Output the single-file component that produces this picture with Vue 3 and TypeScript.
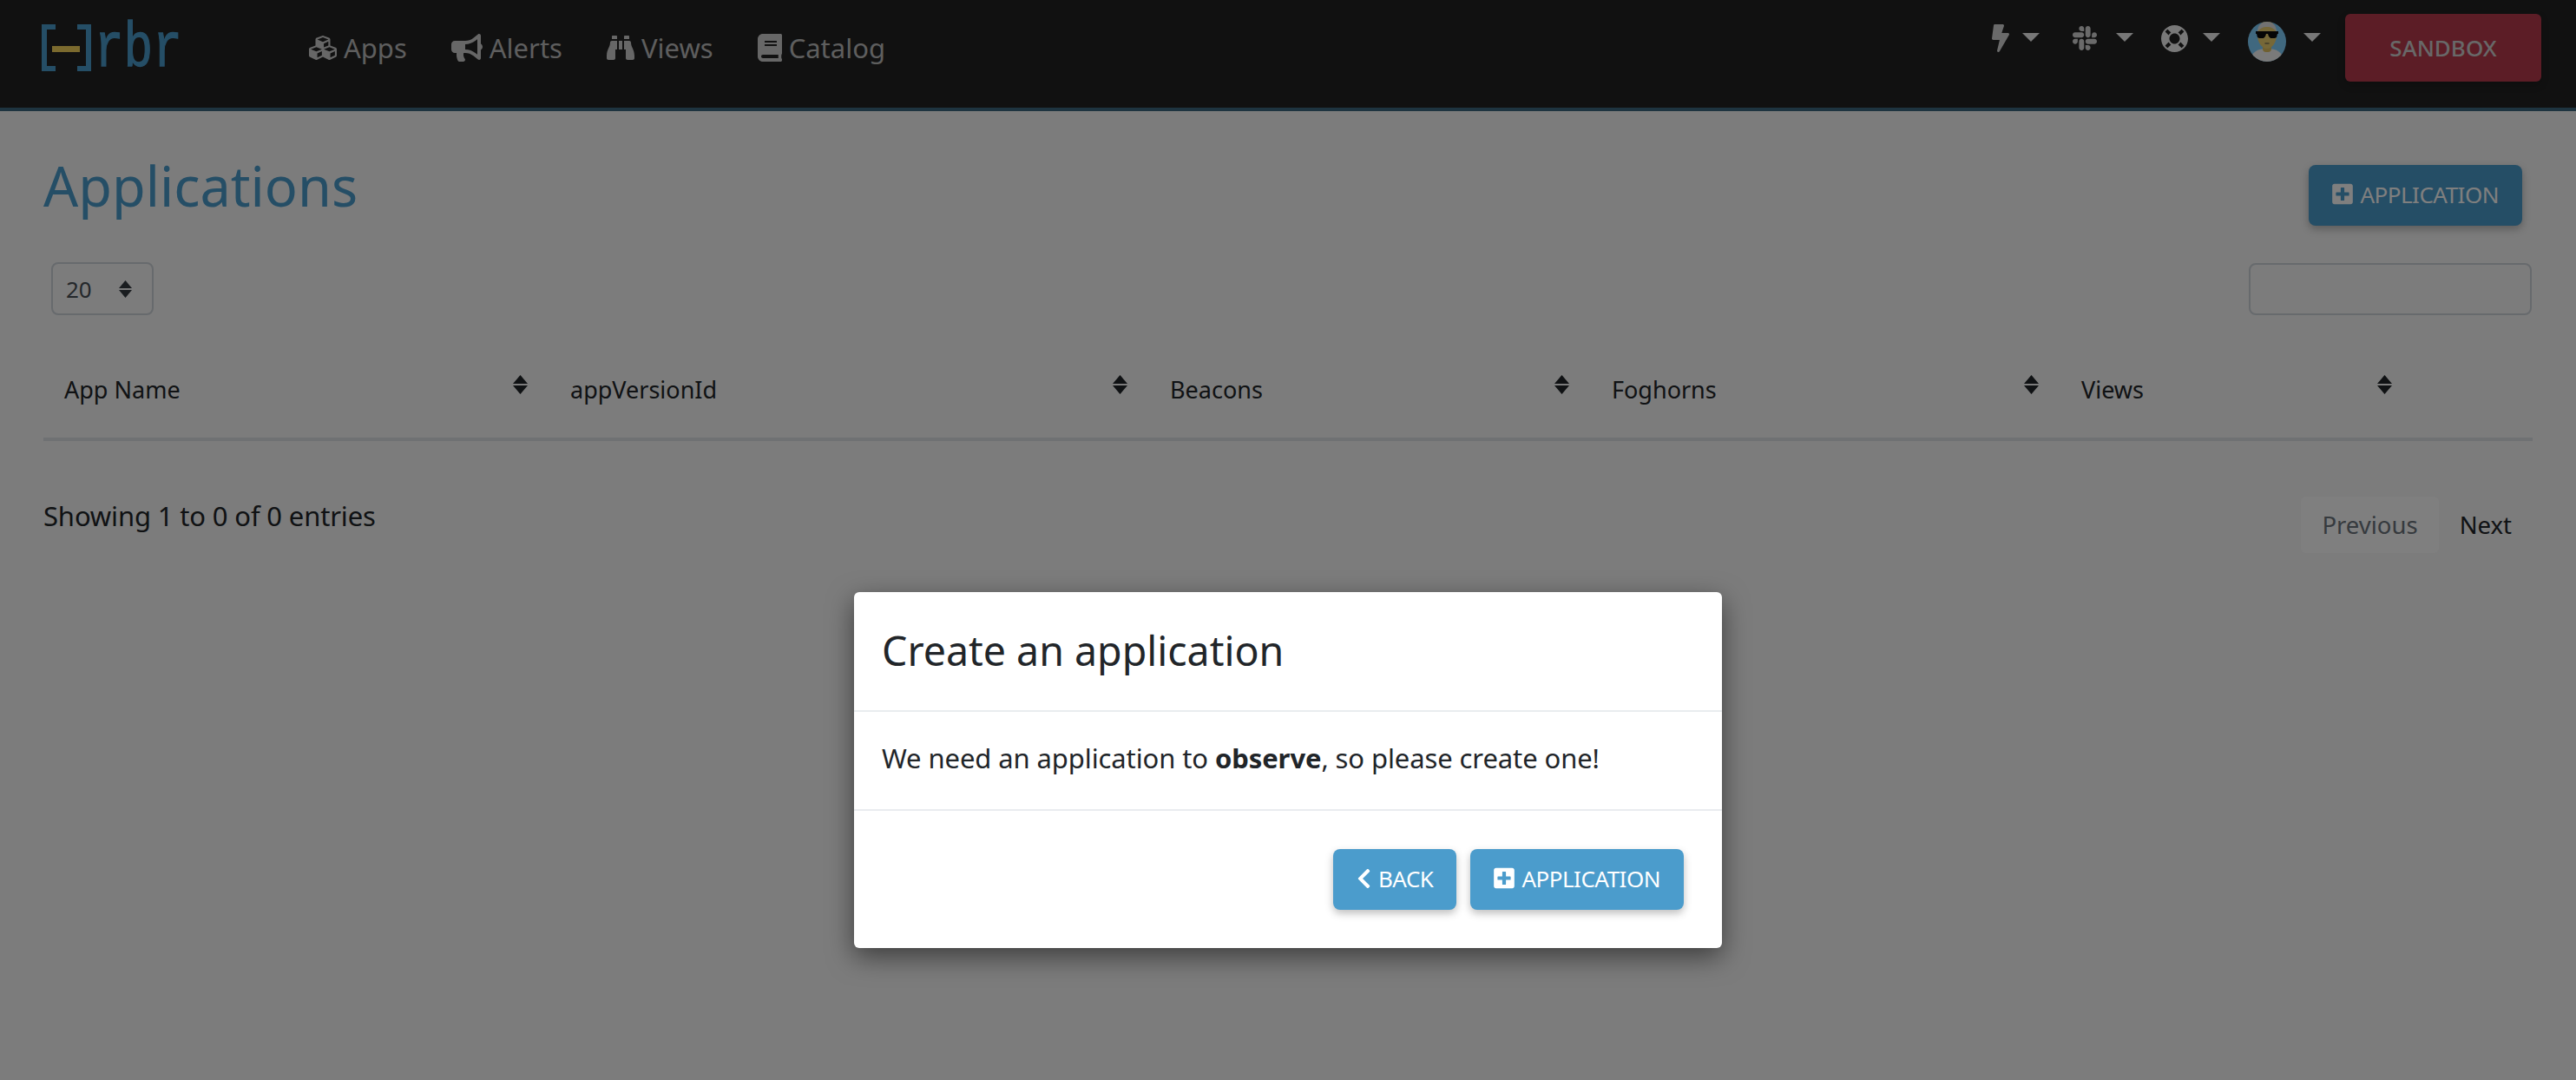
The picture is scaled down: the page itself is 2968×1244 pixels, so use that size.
<script setup lang="ts">
const cols = [
  { name: 'App Name', width: 583 },
  { name: 'appVersionId', width: 691 },
  { name: 'Beacons', width: 509 },
  { name: 'Foghorns', width: 541 },
  { name: 'Views', width: 544 },
]
const plus = 'M400 32H48C21.5 32 0 53.5 0 80v352c0 26.5 21.5 48 48 48h352c26.5 0 48-21.5 48-48V80c0-26.5-21.5-48-48-48zm-32 252c0 6.6-5.4 12-12 12h-92v92c0 6.6-5.4 12-12 12h-56c-6.6 0-12-5.4-12-12v-92H92c-6.6 0-12-5.4-12-12v-56c0-6.6 5.4-12 12-12h92v-92c0-6.6 5.4-12 12-12h56c6.6 0 12 5.4 12 12v92h92c6.6 0 12 5.4 12 12v56z'
const navItems = [
  { label: 'Apps', vb: '0 0 512 512', w: 32, d: 'M488.6 250.2L392 214V105.5c0-15-9.3-28.4-23.4-33.7l-100-37.5c-8.1-3.1-17.1-3.1-25.3 0l-100 37.5c-14.1 5.3-23.4 18.7-23.4 33.7V214l-96.6 36.2C9.3 255.5 0 268.9 0 283.9V394c0 13.6 7.7 26.1 19.9 32.2l100 50c10.1 5.1 22.1 5.1 32.2 0l103.9-52 103.9 52c10.1 5.1 22.1 5.1 32.2 0l100-50c12.2-6.1 19.9-18.6 19.9-32.2V283.9c0-15-9.3-28.4-23.4-33.7zM358 214.8l-85 31.9v-68.2l85-37v73.3zM154 104.1l102-38.2 102 38.2v.6l-102 41.4-102-41.4v-.6zm84 291.1l-85 42.5v-79.1l85-38.8v75.4zm0-112l-102 41.4-102-41.4v-.6l102-38.2 102 38.2v.6zm240 112l-85 42.5v-79.1l85-38.8v75.4zm0-112l-102 41.4-102-41.4v-.6l102-38.2 102 38.2v.6z' },
  { label: 'Alerts', vb: '0 0 576 512', w: 36, d: 'M576 240c0-23.63-12.95-44.04-32-55.12V32.01C544 23.26 537.02 0 512 0c-7.12 0-14.19 2.38-19.98 7.02l-85.03 68.03C364.28 109.19 310.66 128 256 128H64c-35.35 0-64 28.65-64 64v96c0 35.35 28.65 64 64 64h33.7c-1.39 10.48-2.18 21.14-2.18 32 0 39.77 9.26 77.35 25.56 110.94 5.19 10.69 16.52 17.06 28.4 17.06h74.28c26.05 0 41.69-29.84 25.9-50.56-16.4-21.52-26.15-48.36-26.15-77.44 0-11.11 1.62-21.79 4.41-32H256c54.66 0 108.28 18.81 150.98 52.95l85.03 68.03a32.023 32.023 0 0 0 19.98 7.02c24.92 0 32-22.78 32-32V295.13C563.05 284.04 576 263.63 576 240zm-96 141.42l-33.05-26.44C392.95 311.78 325.12 288 256 288v-96c69.12 0 136.95-23.78 190.95-66.98L480 98.58v282.84z' },
  { label: 'Views', vb: '0 0 512 512', w: 32, d: 'M416 48c0-8.84-7.16-16-16-16h-64c-8.84 0-16 7.16-16 16v48h96V48zM63.91 159.99C61.4 253.84 3.46 274.22 0 404v44c0 17.67 14.33 32 32 32h96c17.67 0 32-14.33 32-32V288h32V128H95.84c-17.63 0-31.45 14.37-31.93 31.99zm384.18 0c-.48-17.62-14.3-31.99-31.93-31.99H320v160h32v160c0 17.67 14.33 32 32 32h96c17.67 0 32-14.33 32-32v-44c-3.46-129.78-61.4-150.16-63.91-244.01zM176 32h-64c-8.84 0-16 7.16-16 16v48h96V48c0-8.84-7.16-16-16-16zm48 256h64V128h-64v160z' },
  { label: 'Catalog', vb: '0 0 448 512', w: 28, d: 'M448 360V24c0-13.3-10.7-24-24-24H96C43 0 0 43 0 96v320c0 53 43 96 96 96h328c13.3 0 24-10.7 24-24v-16c0-7.5-3.5-14.3-8.9-18.7-4.2-15.4-4.2-59.3 0-74.7 5.4-4.3 8.9-11.1 8.9-18.6zM128 134c0-3.3 2.7-6 6-6h212c3.3 0 6 2.7 6 6v20c0 3.3-2.7 6-6 6H134c-3.3 0-6-2.7-6-6v-20zm0 64c0-3.3 2.7-6 6-6h212c3.3 0 6 2.7 6 6v20c0 3.3-2.7 6-6 6H134c-3.3 0-6-2.7-6-6v-20zm253.4 250H96c-17.7 0-32-14.3-32-32 0-17.6 14.4-32 32-32h285.4c-1.9 17.1-1.9 46.9 0 64z' },
]
</script>

<template>
  <div class="page">
    <header class="navbar">
      <div class="brand">
        <svg class="brand-mark" viewBox="0 0 57 54" width="57" height="54">
          <path d="M16 3H3v48h13" fill="none" stroke="#4b9ccc" stroke-width="6" />
          <path d="M41 3h13v48H41" fill="none" stroke="#4b9ccc" stroke-width="6" />
          <rect x="12" y="25" width="32" height="7" fill="#f6d55c" />
        </svg>
        <span class="brand-text">rbr</span>
      </div>
      <nav class="nav">
        <a v-for="item in navItems" :key="item.label" class="nav-link">
          <svg :viewBox="item.vb" :width="item.w" height="32" fill="#cfcfcf"><path :d="item.d" /></svg>
          <span>{{ item.label }}</span>
        </a>
      </nav>
      <div class="tools">
        <div class="tool bolt">
          <svg viewBox="0 0 320 512" width="20" height="32" fill="#d4d4d4"><path d="M296 160H180.6l42.6-129.8C227.2 15 215.7 0 200 0H56C44 0 33.8 8.9 32.2 20.8l-32 240C-1.7 275.2 9.5 288 24 288h118.7L96.6 482.5c-3.6 15.2 8 29.5 23.3 29.5 8.4 0 16.4-4.4 20.8-12l176-304c9.3-15.9-2.2-36-20.7-36z" /></svg>
          <i class="caret"></i>
        </div>
        <div class="tool slack">
          <svg viewBox="0 0 448 512" width="28" height="32" fill="#d4d4d4"><path d="M94.12 315.1c0 25.9-21.16 47.06-47.06 47.06S0 341 0 315.1c0-25.9 21.16-47.06 47.06-47.06h47.06v47.06zm23.72 0c0-25.9 21.16-47.06 47.06-47.06s47.06 21.16 47.06 47.06v117.84c0 25.9-21.16 47.06-47.06 47.06s-47.06-21.16-47.06-47.06V315.1zm47.06-188.98c-25.9 0-47.06-21.16-47.06-47.06S139 32 164.9 32s47.06 21.16 47.06 47.06v47.06H164.9zm0 23.72c25.9 0 47.06 21.16 47.06 47.06s-21.16 47.06-47.06 47.06H47.06C21.16 243.96 0 222.8 0 196.9s21.16-47.06 47.06-47.06H164.9zm188.98 47.06c0-25.9 21.16-47.06 47.06-47.06 25.9 0 47.06 21.16 47.06 47.06s-21.16 47.06-47.06 47.06h-47.06V196.9zm-23.72 0c0 25.9-21.16 47.06-47.06 47.06-25.9 0-47.06-21.16-47.06-47.06V79.06c0-25.9 21.16-47.06 47.06-47.06 25.9 0 47.06 21.16 47.06 47.06V196.9zM283.1 385.88c25.9 0 47.06 21.16 47.06 47.06 0 25.9-21.16 47.06-47.06 47.06-25.9 0-47.06-21.16-47.06-47.06v-47.06h47.06zm0-23.72c-25.9 0-47.06-21.16-47.06-47.06 0-25.9 21.16-47.06 47.06-47.06h117.84c25.9 0 47.06 21.16 47.06 47.06 0 25.9-21.16 47.06-47.06 47.06H283.1z" /></svg>
          <i class="caret"></i>
        </div>
        <div class="tool ring">
          <svg viewBox="8 8 496 496" width="31" height="31" fill="#f0f0f0"><path d="M256 8C119 8 8 119 8 256s111 248 248 248 248-111 248-248S393 8 256 8zm173.696 119.559l-63.399 63.399c-10.987-18.559-26.67-34.252-45.255-45.255l63.399-63.399a218.396 218.396 0 0 1 45.255 45.255zM256 352c-53.019 0-96-42.981-96-96s42.981-96 96-96 96 42.981 96 96-42.981 96-96 96zM127.559 82.304l63.399 63.399c-18.559 10.987-34.252 26.67-45.255 45.255l-63.399-63.399a218.372 218.372 0 0 1 45.255-45.255zM82.304 384.441l63.399-63.399c10.987 18.559 26.67 34.252 45.255 45.255l-63.399 63.399a218.396 218.396 0 0 1-45.255-45.255zm302.137 45.255l-63.399-63.399c18.559-10.987 34.252-26.67 45.255-45.255l63.399 63.399a218.403 218.403 0 0 1-45.255 45.255z" /></svg>
          <i class="caret"></i>
        </div>
        <div class="tool avatar-tool">
          <svg viewBox="0 0 44 46" width="44" height="46">
            <defs><clipPath id="av"><ellipse cx="22" cy="23" rx="22" ry="23" /></clipPath></defs>
            <g clip-path="url(#av)">
              <rect width="44" height="46" fill="#80d0ff" />
              <path d="M3 46c0-11 8-15 19-15s19 4 19 15z" fill="#f4f4f4" />
              <rect x="17" y="24" width="10" height="11" rx="4" fill="#e0c060" />
              <ellipse cx="22" cy="15" rx="11" ry="16" fill="#ecd070" />
              <path d="M11 12C11 3 17 0 22 0s11 3 11 12c-3-5-7-6-11-6s-8 1-11 6z" fill="#e4e4e4" />
              <path d="M9 11h26v3h-1l-1 4-2 1h-5l-2-2-1-3h-2l-1 3-2 2h-5l-2-1-1-4H9z" fill="#0d0d0d" />
              <path d="M19.500 25h5" stroke="#444" stroke-width="1" />
            </g>
          </svg>
          <i class="caret"></i>
        </div>
        <button class="sandbox">SANDBOX</button>
      </div>
    </header>

    <main class="content">
      <div class="title-row">
        <h1 class="title">Applications</h1>
        <button class="btn">
          <svg viewBox="0 0 448 512" width="24" height="27" fill="currentColor"><path :d="plus" /></svg>
          APPLICATION
        </button>
      </div>
      <div class="filter-row">
        <div class="length-select">
          <span>20</span>
          <svg viewBox="0 0 15 20" width="15" height="20"><path d="M7.500 0l7.500 9H0zM7.500 20l7.500-9H0z" fill="#343a40" /></svg>
        </div>
        <div class="search-box"></div>
      </div>
      <div class="table-head">
        <div v-for="col in cols" :key="col.name" class="th" :style="{ width: col.width + 'px' }">
          <span>{{ col.name }}</span>
          <svg viewBox="0 0 17 22" width="17" height="22"><path d="M8.500 0L17 10H0zM8.500 22L17 12H0z" fill="#212529" /></svg>
        </div>
      </div>
      <div class="foot-row">
        <div class="info">Showing 1 to 0 of 0 entries</div>
        <div class="pager">
          <span class="page-btn disabled">Previous</span>
          <span class="page-btn">Next</span>
        </div>
      </div>
    </main>

    <div class="backdrop"></div>

    <div class="modal">
      <div class="modal-header">Create an application</div>
      <div class="modal-body">We need an application to <b>observe</b>, so please create one!</div>
      <div class="modal-footer">
        <button class="btn">
          <svg viewBox="0 0 320 512" width="17" height="26" fill="currentColor"><path d="M34.52 239.03L228.87 44.69c9.37-9.37 24.57-9.37 33.94 0l22.67 22.67c9.36 9.36 9.37 24.52.04 33.9L131.49 256l154.02 154.75c9.34 9.38 9.32 24.54-.04 33.9l-22.67 22.67c-9.37 9.37-24.57 9.37-33.94 0L34.52 272.97c-9.37-9.37-9.37-24.57 0-33.94z" /></svg>
          BACK
        </button>
        <button class="btn">
          <svg viewBox="0 0 448 512" width="24" height="27" fill="currentColor"><path :d="plus" /></svg>
          APPLICATION
        </button>
      </div>
    </div>
  </div>
</template>

<style scoped>
.page {
  position: relative;
  width: 2968px;
  height: 1244px;
  overflow: hidden;
  background: #f8f8f8;
  color: #212529;
  font-family: "Noto Sans", "Open Sans", sans-serif;
  font-size: 31px;
}
.navbar {
  height: 128px;
  box-sizing: border-box;
  background: #222;
  border-bottom: 4px solid #3d6880;
  display: flex;
  align-items: center;
  padding: 0 40px 14px 48px;
}
.brand {
  display: flex;
  align-items: flex-end;
  width: 308px;
  color: #4b9ccc;
}
.brand-mark { flex: none; }
.brand-text {
  font-family: "Liberation Mono", monospace;
  font-size: 56px;
  line-height: 54px;
  margin-left: 4px;
  -webkit-text-stroke: 1px #4b9ccc;
  transform: translateY(6px) scaleY(1.3);
  transform-origin: 50% 42px;
}
.nav { display: flex; gap: 51px; }
.nav-link {
  display: flex;
  align-items: center;
  gap: 8px;
  color: #bdbdbd;
  font-size: 31px;
}
.tools {
  margin-left: auto;
  display: flex;
  align-items: center;
}
.tool {
  display: flex;
  align-items: center;
  margin-bottom: 22px;
}
.caret {
  display: block;
  width: 0;
  height: 0;
  border-left: 10px solid transparent;
  border-right: 10px solid transparent;
  border-top: 10px solid #f0f0f0;
  margin-bottom: 3px;
}
.bolt { gap: 15px; margin-right: 38px; }
.slack { gap: 22px; margin-right: 32px; }
.ring { gap: 17px; margin-right: 32px; }
.avatar-tool { gap: 20px; margin-right: 28px; margin-bottom: 14px; }
.avatar-tool .caret { margin-bottom: 10px; }
.sandbox {
  width: 226px;
  height: 78px;
  border: 0;
  border-radius: 6px;
  background: #b93a4d;
  color: #d0d0d0;
  font: 500 26px "Noto Sans", sans-serif;
  box-shadow: 0 4px 10px rgba(0, 0, 0, 0.2);
}
.content { padding: 0 50px; }
.title-row {
  display: flex;
  justify-content: space-between;
  align-items: flex-start;
  height: 174px;
}
.title {
  margin: 50px 0 0;
  font-size: 63px;
  font-weight: 400;
  line-height: 72px;
  color: #4b9ccc;
}
.btn {
  display: inline-flex;
  align-items: center;
  gap: 8px;
  box-sizing: border-box;
  height: 70px;
  padding: 0 27px 3px;
  border: 0;
  border-radius: 8px;
  background: #4b9ccc;
  color: #fff;
  font-family: inherit;
  font-size: 26px;
  letter-spacing: -0.5px;
  box-shadow: 0 4px 10px rgba(0, 0, 0, 0.26);
}
.title-row .btn { margin: 62px 12px 0 0; }
.filter-row {
  display: flex;
  justify-content: space-between;
  align-items: flex-start;
  padding: 0 1px 0 9px;
}
.length-select {
  box-sizing: border-box;
  width: 118px;
  height: 61px;
  border: 2px solid #ced4da;
  border-radius: 8px;
  display: flex;
  align-items: center;
  justify-content: space-between;
  padding: 0 23px 0 15px;
  font-size: 26px;
  color: #495057;
}
.search-box {
  box-sizing: border-box;
  width: 326px;
  height: 60px;
  margin-top: 1px;
  border: 2px solid #ced4da;
  border-radius: 8px;
}
.table-head {
  box-sizing: border-box;
  display: flex;
  height: 122px;
  margin-top: 23px;
  border-bottom: 4px solid #dee2e6;
}
.th {
  box-sizing: border-box;
  display: flex;
  justify-content: space-between;
  align-items: flex-start;
  padding: 44px 25px 0 24px;
  font-size: 27px;
}
.th:last-child { padding-right: 162px; }
.th svg { margin-top: 2px; }
.foot-row {
  display: flex;
  justify-content: space-between;
  align-items: flex-start;
  margin-top: 66px;
}
.info { line-height: 40px; letter-spacing: -0.15px; }
.pager { display: flex; margin-top: -2px; }
.page-btn {
  padding: 0 24px;
  line-height: 65px;
  font-size: 27.5px;
  border-radius: 6px;
}
.page-btn.disabled { color: #6c757d; background: #fff; }
.backdrop {
  position: absolute;
  inset: 0;
  background: rgba(0, 0, 0, 0.5);
}
.modal {
  position: absolute;
  left: 984px;
  top: 682px;
  width: 1000px;
  height: 410px;
  background: #fff;
  border-radius: 6px;
  box-shadow: 0 10px 30px rgba(0, 0, 0, 0.5);
  display: flex;
  flex-direction: column;
}
.modal-header {
  height: 138px;
  box-sizing: border-box;
  padding: 0 32px 3px;
  display: flex;
  align-items: center;
  font-size: 46.5px;
  border-bottom: 2px solid #e9ecef;
}
.modal-body {
  height: 114px;
  box-sizing: border-box;
  padding: 0 32px;
  border-bottom: 2px solid #e9ecef;
  line-height: 107px;
  letter-spacing: -0.1px;
}
.modal-footer {
  flex: 1;
  display: flex;
  justify-content: flex-end;
  align-items: flex-start;
  gap: 16px;
  padding: 44px 44px 0 0;
}
</style>

<style>
html, body { margin: 0; background: #fff; }
</style>
